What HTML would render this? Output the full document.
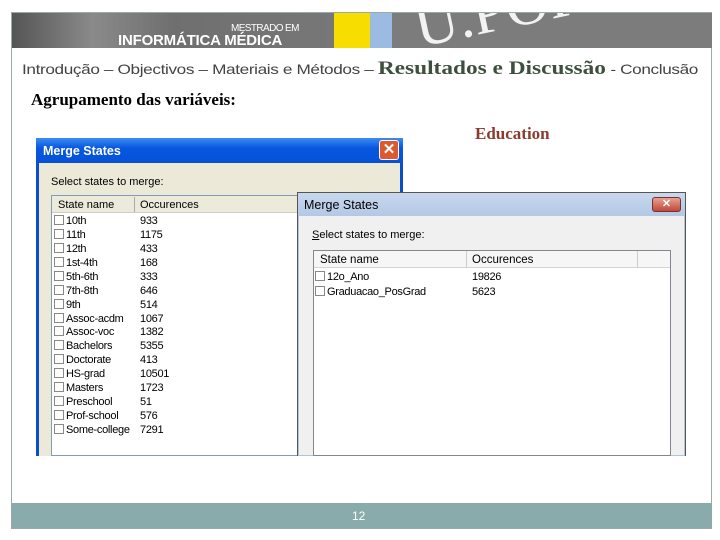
<!DOCTYPE html>
<html><head><meta charset="utf-8"><style>
*{margin:0;padding:0;box-sizing:border-box}
body{width:720px;height:540px;background:#fff;position:relative;overflow:hidden;font-family:"Liberation Sans",sans-serif}
.a{position:absolute}
.slide{left:11px;top:12px;width:701px;height:517px;border:1px solid #9aa;}
.row{position:absolute;font-size:11px;color:#000;white-space:nowrap;letter-spacing:-0.3px}
.cb{display:inline-block;width:10px;height:10px;border:1px solid #888;background:#fff;vertical-align:-1px;margin-right:2px}
</style></head><body>
<div class="a slide"></div>
<div class="a" style="left:12px;top:13px;width:322px;height:35px;background:linear-gradient(90deg,#555 0%,#8a8a8a 25%,#6f6f6f 50%,#777 100%)"></div>
<div class="a" style="left:231px;top:23px;font-size:10px;color:#fff;letter-spacing:-0.6px">MESTRADO EM</div>
<div class="a" style="left:118px;top:32px;font-size:15px;font-weight:bold;color:#fff;letter-spacing:-0.2px">INFORMÁTICA MÉDICA</div>
<div class="a" style="left:334px;top:13px;width:36px;height:35px;background:#f8de00"></div>
<div class="a" style="left:370px;top:13px;width:22px;height:35px;background:#9cbbe2"></div>
<div class="a" style="left:392px;top:13px;width:320px;height:35px;background:#7c7c7c;overflow:hidden">
<div class="a" style="left:28px;top:-16px;font-family:'Liberation Serif',serif;font-size:60px;line-height:60px;color:#f2f2f2;transform:rotate(-12deg);transform-origin:0 53px;white-space:nowrap">U.POR</div></div>
<div id="nav" class="a" style="left:22px;top:58px;font-size:14px;color:#444;font-family:'Liberation Sans',sans-serif;white-space:nowrap;transform-origin:0 0;letter-spacing:-0.3px">Introdução – Objectivos – Materiais e Métodos – <span style="font-family:'Liberation Serif',serif;font-size:19px;color:#3f4f3f;font-weight:bold;letter-spacing:0">Resultados e Discussão</span> - Conclusão</div>
<div class="a" style="left:31px;top:90px;font-family:'Liberation Serif',serif;font-weight:bold;font-size:17px;color:#000">Agrupamento das variáveis:</div>
<div class="a" style="left:475px;top:124px;font-family:'Liberation Serif',serif;font-weight:bold;font-size:17px;color:#8b3a2e">Education</div>
<div class="a" style="left:36px;top:138px;width:367px;height:318px;background:#ece9d8;border-left:3px solid #0a4fc8;border-right:3px solid #0a4fc8"></div>
<div class="a" style="left:36px;top:138px;width:367px;height:25px;background:linear-gradient(#3c8cf4,#0857e0 40%,#0552d8)"></div>
<div class="a" style="left:43px;top:144px;color:#fff;font-weight:bold;font-size:12.5px">Merge States</div>
<div class="a" style="left:379px;top:140px;width:20px;height:20px;background:#dd5a30;border:1px solid #fff;border-radius:3px;color:#fff;font-size:15px;line-height:18px;text-align:center;font-weight:bold">✕</div>
<div class="a" style="left:51px;top:176px;font-size:11px">Select states to merge:</div>
<div class="a" style="left:51px;top:195px;width:250px;height:261px;background:#fff;border:1px solid #7f9db9"></div>
<div class="a" style="left:52px;top:196px;width:248px;height:17px;background:#ebeadb;border-bottom:1px solid #d0cfc0"></div>
<div class="a" style="left:134px;top:197px;width:1px;height:15px;background:#aaa"></div>
<div class="a" style="left:58px;top:199px;font-size:11px">State name</div>
<div class="a" style="left:140px;top:199px;font-size:11px">Occurences</div>
<div id="l1"></div>
<div class="a" style="left:297px;top:192px;width:389px;height:264px;background:#f0f0f0;border:1px solid #555;border-bottom:none;box-shadow:0 0 0 1px #b0c4de inset"></div>
<div class="a" style="left:298px;top:193px;width:387px;height:23px;background:linear-gradient(#c8d8ee,#b4c8e4)"></div>
<div class="a" style="left:304px;top:198px;font-size:12.5px;color:#000">Merge States</div>
<div class="a" style="left:652px;top:197px;width:29px;height:15px;background:linear-gradient(#e8a090,#c0483a);border:1px solid #733;border-radius:3px;color:#fff;font-size:11px;line-height:13px;text-align:center;font-weight:bold">✕</div>
<div class="a" style="left:312px;top:229px;font-size:11px"><u>S</u>elect states to merge:</div>
<div class="a" style="left:313px;top:250px;width:358px;height:206px;background:#fff;border:1px solid #828790"></div>
<div class="a" style="left:314px;top:251px;width:356px;height:17px;background:#f6f6f6;border-bottom:1px solid #d5d5d5"></div>
<div class="a" style="left:466px;top:251px;width:1px;height:17px;background:#ccc"></div>
<div class="a" style="left:637px;top:251px;width:1px;height:17px;background:#ccc"></div>
<div class="a" style="left:320px;top:254px;font-size:11.5px">State name</div>
<div class="a" style="left:472px;top:254px;font-size:11.5px">Occurences</div>
<div class="row" style="left:315px;top:271px"><span class="cb"></span>12o_Ano</div>
<div class="row" style="left:472px;top:271px">19826</div>
<div class="row" style="left:315px;top:286px"><span class="cb"></span>Graduacao_PosGrad</div>
<div class="row" style="left:472px;top:286px">5623</div>
<div class="a" style="left:12px;top:503px;width:700px;height:25px;background:#8aabab"></div>
<div class="a" style="left:352px;top:509px;font-size:12px;color:#fff">12</div>
<script>
var d=[["10th",933],["11th",1175],["12th",433],["1st-4th",168],["5th-6th",333],["7th-8th",646],["9th",514],["Assoc-acdm",1067],["Assoc-voc",1382],["Bachelors",5355],["Doctorate",413],["HS-grad",10501],["Masters",1723],["Preschool",51],["Prof-school",576],["Some-college",7291]];
var h="";d.forEach(function(r,i){var y=215+i*13.93;h+='<div class="row" style="left:54px;top:'+y+'px"><span class="cb"></span>'+r[0]+'</div><div class="row" style="left:140px;top:'+y+'px">'+r[1]+'</div>';});
document.getElementById("l1").outerHTML=h;
var n=document.getElementById("nav");var w=n.getBoundingClientRect().width;n.style.transform="scaleX("+(676/w)+")";
</script>
</body></html>
